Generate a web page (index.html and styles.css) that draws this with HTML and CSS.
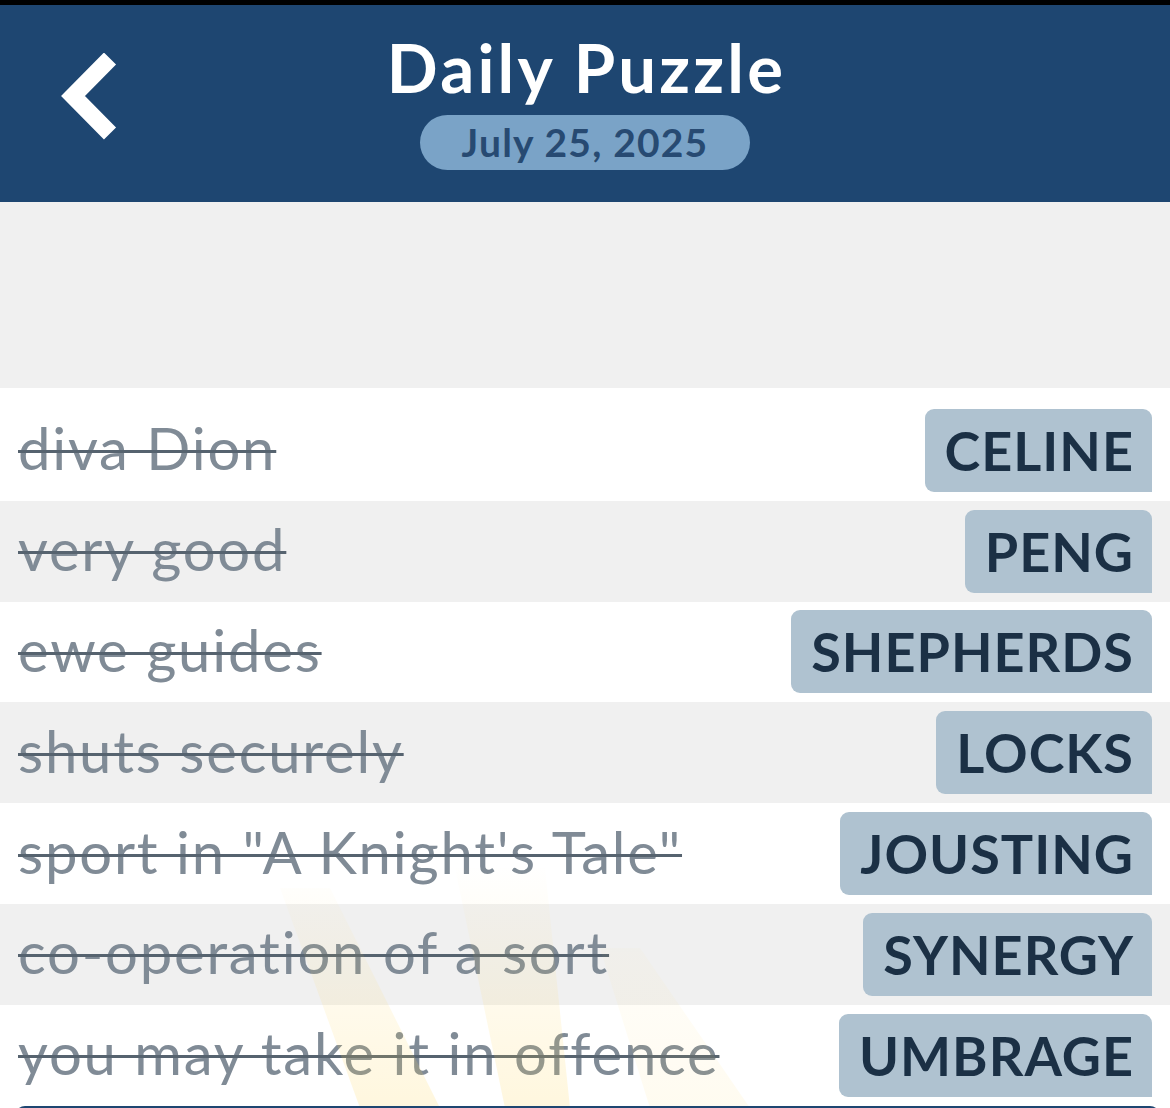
FILE: index.html
```html
<!DOCTYPE html>
<html lang="en">
<head>
<meta charset="utf-8">
<title>Daily Puzzle</title>
<link rel="stylesheet" href="styles.css">
</head>
<body>
<div class="app">
  <div class="statusbar"></div>
  <header class="header">
    <div class="back">
      <svg class="back-icon" viewBox="0 0 60 100" width="60" height="100" aria-hidden="true">
        <polyline points="50,5.5 13,43 50,80.5" fill="none" stroke="#ffffff" stroke-width="17" stroke-linejoin="miter" stroke-linecap="butt"/>
      </svg>
    </div>
    <div class="title-block">
      <h1 class="title">Daily Puzzle</h1>
      <div class="date">July 25, 2025</div>
    </div>
    <div class="spacer"></div>
  </header>
  <div class="gap-area"></div>
  <main class="list">
    <div class="row"><span class="clue">diva Dion</span><span class="answer">CELINE</span></div>
    <div class="row alt"><span class="clue">very good</span><span class="answer">PENG</span></div>
    <div class="row"><span class="clue">ewe guides</span><span class="answer">SHEPHERDS</span></div>
    <div class="row alt"><span class="clue">shuts securely</span><span class="answer">LOCKS</span></div>
    <div class="row"><span class="clue">sport in "A Knight's Tale"</span><span class="answer">JOUSTING</span></div>
    <div class="row alt"><span class="clue">co-operation of a sort</span><span class="answer">SYNERGY</span></div>
    <div class="row"><span class="clue">you may take it in offence</span><span class="answer">UMBRAGE</span></div>
    <div class="rays" aria-hidden="true">
      <div class="ray ray1"></div>
      <div class="ray ray2"></div>
      <div class="ray ray3"></div>
    </div>
  </main>
  <div class="footer-bar"></div>
</div>
</body>
</html>
```

FILE: styles.css
```css
html, body {
  margin: 0;
  padding: 0;
  background: #ffffff;
}

.app {
  width: 1170px;
  height: 1108px;
  overflow: hidden;
  display: flex;
  flex-direction: column;
  font-family: Lato, "Open Sans", sans-serif;
}

.statusbar {
  height: 5px;
  background: #000000;
  flex: none;
}

.header {
  flex: none;
  height: 197px;
  background: #1e4671;
  display: grid;
  grid-template-columns: 1fr auto 1fr;
  align-items: start;
}

.back {
  padding-left: 60px;
  padding-top: 48px;
}

.back-icon {
  display: block;
}

.title-block {
  display: flex;
  flex-direction: column;
  align-items: center;
  padding-top: 29px;
}

.title {
  margin: 0;
  color: #ffffff;
  font-size: 67px;
  font-weight: 700;
  line-height: 66px;
  letter-spacing: 3.2px;
  padding-left: 3px;
}

.date {
  margin-top: 15px;
  width: 330px;
  height: 55px;
  border-radius: 28px;
  background: #7aa3c7;
  color: #274a72;
  font-size: 39px;
  font-weight: 700;
  line-height: 55px;
  letter-spacing: 1.2px;
  text-align: center;
}

.gap-area {
  flex: none;
  height: 186px;
  background: #f0f0f0;
}

.list {
  position: relative;
  flex: none;
  padding-top: 12px;
  background: #ffffff;
}

.row {
  height: 100.8px;
  display: flex;
  align-items: center;
  justify-content: space-between;
  padding: 0 18px;
  background: #ffffff;
}

.row.alt {
  background: #f0f0f0;
}

.clue {
  color: #808b96;
  font-size: 58px;
  font-weight: 400;
  letter-spacing: 1.8px;
  margin-top: -5px;
  text-decoration: line-through;
  text-decoration-color: #56636f;
  text-decoration-thickness: 3px;
  white-space: nowrap;
}

.answer {
  background: #afc2d0;
  color: #1b3045;
  font-size: 54px;
  font-weight: 700;
  letter-spacing: 1px;
  height: 83px;
  line-height: 83px;
  padding: 0 18px 0 20px;
  border-radius: 9px 9px 0 9px;
  white-space: nowrap;
}

.rays {
  position: absolute;
  left: 0;
  top: 0;
  width: 100%;
  height: 100%;
  pointer-events: none;
}

.ray {
  position: absolute;
  left: 0;
  top: 0;
  width: 100%;
  height: 100%;
  background: linear-gradient(to bottom, rgba(255, 214, 90, 0) 66%, rgba(255, 214, 90, 0.2) 100%);
}

.ray1 {
  clip-path: polygon(280px 500px, 330px 500px, 440px 720px, 360px 720px);
}

.ray2 {
  clip-path: polygon(455px 480px, 545px 480px, 570px 720px, 505px 720px);
}

.ray3 {
  opacity: 0.45;
  clip-path: polygon(600px 560px, 640px 560px, 750px 720px, 650px 720px);
}

.footer-bar {
  flex: none;
  height: 20px;
  margin: 0 10px 0 15px;
  background: #1e4671;
  border-radius: 10px 10px 0 0;
}
```
